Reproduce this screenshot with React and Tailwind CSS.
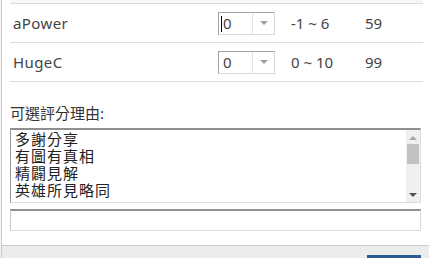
const rows = [
  { name: "aPower", value: "0", range: "-1 ~ 6", score: "59", focused: true },
  { name: "HugeC", value: "0", range: "0 ~ 10", score: "99", focused: false },
];

const reasons = ["多謝分享", "有圖有真相", "精闢見解", "英雄所見略同"];

const Combo = ({ value, focused }) => (
  <div className="flex h-[23px] w-[57px] border border-t-[#a3a3a3] border-l-[#a3a3a3] border-r-[#d9d9d9] border-b-[#d9d9d9] bg-white">
    <div className="relative flex w-[33px] items-center pl-[4px] text-[15px] text-[#444]">
      {focused && <span className="absolute left-[2px] top-[3px] h-[16px] w-px bg-black" />}
      {value}
    </div>
    <div className="flex flex-1 items-center justify-center border-l border-[#e2e2e2]">
      <span className="h-0 w-0 border-x-[4px] border-t-[4px] border-x-transparent border-t-[#a0a0a0]" />
    </div>
  </div>
);

export default function App() {
  return (
    <div className="flex h-[258px] w-[429px] overflow-hidden bg-white font-['Noto_Sans','Noto_Sans_CJK_TC',sans-serif] text-[#444]">
      <div className="w-[2px] border-r border-[#cdcdcd] bg-[#f2f2f2]" />

      <div className="flex flex-1 flex-col">
        <div className="flex flex-1 flex-col pl-[8px] pr-[6px]">
          <div className="h-[4px] border-b border-[#dcdcdc] bg-[#f7f7f7]" />

          {rows.map((row) => (
            <div key={row.name} className="flex h-[39px] items-center border-b border-[#dcdcdc] text-[15px]">
              <div className="w-[208px] pl-[3px] tracking-[0.4px]">{row.name}</div>
              <Combo value={row.value} focused={row.focused} />
              <div className="w-[90px] pl-[16px]">{row.range}</div>
              <div>{row.score}</div>
            </div>
          ))}

          <div className="flex h-[46px] items-end pb-[4px] text-[15px] text-[#333]">可選評分理由:</div>

          <div className="mr-[2px] flex h-[75px] border border-t-2 border-t-[#8f8f8f] border-l-[#9a9a9a] border-r-[#dcdcdc] border-b-[#dcdcdc]">
            <div className="flex-1 pl-[4px] pt-[1px] text-[15px] leading-[17px] tracking-[1px] text-[#222]">
              {reasons.map((r) => (
                <div key={r}>{r}</div>
              ))}
            </div>
            <div className="flex w-[14px] flex-col items-center bg-[#f0f0f0]">
              <span className="mt-[6px] h-0 w-0 border-x-[4px] border-b-[4px] border-x-transparent border-b-[#a8a8a8]" />
              <span className="mt-[4px] h-[20px] w-[12px] bg-[#c1c1c1]" />
              <span className="mt-auto mb-[5px] h-0 w-0 border-x-[4px] border-t-[4px] border-x-transparent border-t-[#505050]" />
            </div>
          </div>

          <div className="mr-[2px] mt-[6px] h-[22px] border border-t-2 border-t-[#8f8f8f] border-l-[#c8c8c8] border-r-[#dcdcdc] border-b-[#dcdcdc] bg-white" />
        </div>

        <div className="flex h-[13px] justify-end border-t border-[#cccccc] bg-[#ececec] pr-[8px] pt-[9px]">
          <div className="h-[4px] w-[54px] bg-[#2b5a96]" />
        </div>
      </div>
    </div>
  );
}
